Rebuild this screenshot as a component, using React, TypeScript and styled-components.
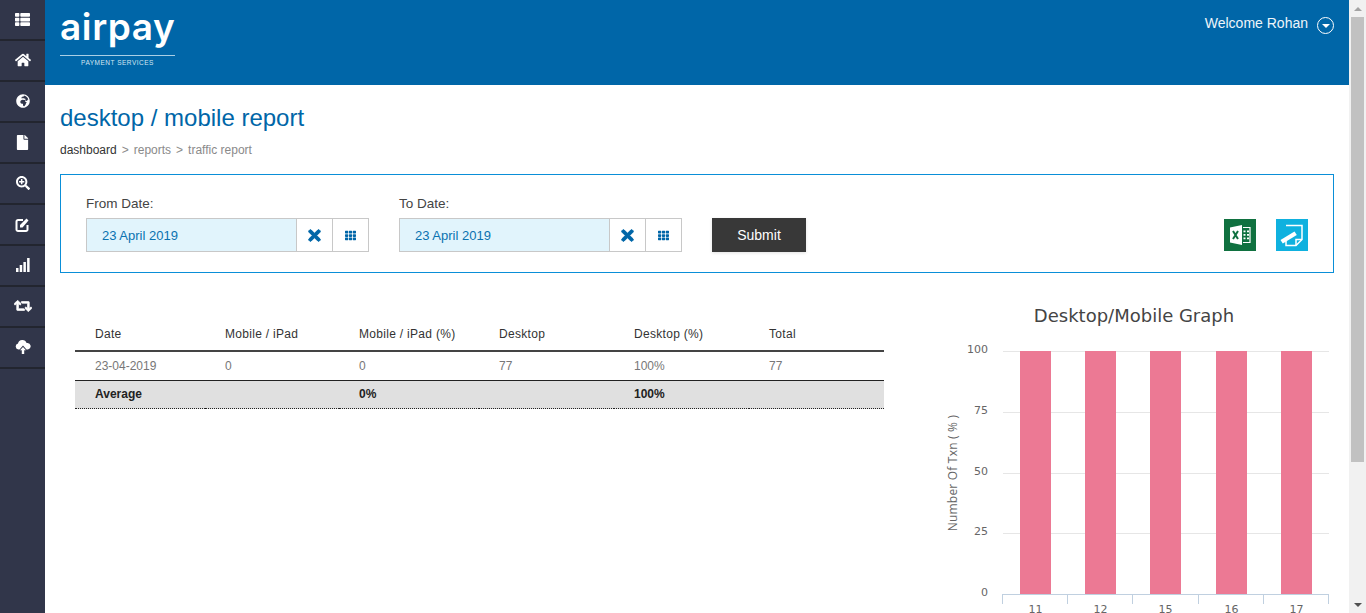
import React from 'react';
import styled, { createGlobalStyle } from 'styled-components';
import { FaHome, FaGlobeAfrica, FaFile, FaSearchPlus, FaRetweet, FaTh, FaThList, FaTimes } from 'react-icons/fa';

const GlobalStyle = createGlobalStyle`
  html, body {
    margin: 0;
    height: 100%;
    overflow: hidden;
    background: #fff;
    font-family: "Liberation Sans", Arial, sans-serif;
  }
`;

const Shell = styled.div`
  display: flex;
  width: 1366px;
  height: 613px;
  overflow: hidden;
`;

const Sidebar = styled.nav`
  flex: 0 0 45px;
  background: #31364a;
`;

const SideItem = styled.div`
  height: 38px;
  padding-bottom: 1px;
  display: flex;
  align-items: center;
  justify-content: center;
  color: #fff;
  font-size: 15px;
  border-bottom: 2px solid #22252f;
`;

const Main = styled.div`
  flex: 0 0 1304px;
  display: flex;
  flex-direction: column;
  height: 613px;
  overflow: hidden;
`;

const Header = styled.header`
  height: 85px;
  flex: none;
  background: #0066a8;
  display: flex;
  justify-content: space-between;
  padding: 0 15px;
  box-sizing: border-box;
`;

const Logo = styled.div`
  width: 115px;
  margin-top: 8px;
  color: #fff;
  text-align: center;
`;

const LogoWord = styled.div`
  font-family: "Inter", sans-serif;
  font-weight: 600;
  font-size: 37px;
  line-height: 38px;
  letter-spacing: 0.6px;
  white-space: nowrap;
  border-bottom: 1px solid #a9cfe6;
  height: 47px;
`;

const LogoSub = styled.div`
  font-size: 6.5px;
  line-height: 13px;
  letter-spacing: 0.5px;
  color: #d5e6f2;
`;

const Welcome = styled.div`
  margin-top: 14px;
  display: flex;
  align-items: center;
  gap: 9px;
  height: 18px;
  color: #eef5fa;
  font-size: 14px;
`;

const CaretCircle = styled.span`
  width: 15px;
  height: 15px;
  border: 1px solid #fff;
  border-radius: 50%;
  margin-top: 4px;
  display: flex;
  align-items: center;
  justify-content: center;
  &::after {
    content: '';
    margin-top: 2px;
    border-left: 4px solid transparent;
    border-right: 4px solid transparent;
    border-top: 4px solid #fff;
  }
`;

const Content = styled.div`
  padding: 19px 15px 0;
`;

const Title = styled.h1`
  margin: 0;
  font-weight: 400;
  font-size: 24px;
  line-height: 28px;
  color: #0066a8;
`;

const Crumbs = styled.div`
  margin-top: 11px;
  display: flex;
  gap: 5px;
  font-size: 12px;
  line-height: 14px;
  color: #8a8a8a;
`;

const CrumbActive = styled.span`
  color: #333;
`;

const FilterBox = styled.section`
  margin-top: 17px;
  height: 99px;
  box-sizing: border-box;
  border: 1px solid #0a8fd8;
  padding: 21px 25px 0;
  display: flex;
  align-items: flex-start;
`;

const Field = styled.div`
  width: 283px;
  margin-right: 30px;
`;

const FieldLabel = styled.div`
  font-size: 13.5px;
  line-height: 15px;
  color: #444;
  margin-bottom: 7px;
`;

const InputGroup = styled.div`
  display: flex;
  height: 34px;
  box-sizing: border-box;
  border: 1px solid #c8c8c8;
`;

const DateValue = styled.div`
  flex: 1;
  background: #e1f4fc;
  color: #0a72b0;
  font-size: 13px;
  line-height: 33px;
  padding-left: 15px;
`;

const AddOn = styled.div`
  width: 35px;
  border-left: 1px solid #c8c8c8;
  display: flex;
  align-items: center;
  justify-content: center;
  color: #0066a8;
`;

const SubmitButton = styled.button`
  margin-top: 22px;
  width: 94px;
  height: 34px;
  border: 0;
  background: #383838;
  color: #fff;
  font: 14px "Liberation Sans", Arial, sans-serif;
  box-shadow: 0 1px 3px rgba(0, 0, 0, 0.12);
`;

const ExportIcons = styled.div`
  margin-left: auto;
  margin-top: 23px;
  display: flex;
  gap: 20px;
`;

const Lower = styled.div`
  display: flex;
  padding-left: 15px;
  margin-top: 22px;
`;

const TableWrap = styled.div`
  flex: 0 0 809px;
  padding-top: 9px;
`;

const Table = styled.table`
  width: 809px;
  border-collapse: collapse;
  table-layout: fixed;
  font-size: 12px;
  color: #777;
`;

const HeadRow = styled.tr`
  height: 47px;
  border-bottom: 2px solid #444;
`;

const Th = styled.th<{ $w: number }>`
  width: ${p => p.$w}px;
  box-sizing: border-box;
  font-weight: 400;
  text-align: left;
  color: #333;
  letter-spacing: 0.3px;
  padding: 14px 0 0 20px;
`;

const Td = styled.td`
  padding: 0 0 0 20px;
  height: 28px;
`;

const TotalRow = styled.tr`
  background: #e0e0e0;
  color: #222;
  font-weight: 700;
  border-top: 1px solid #222;
  border-bottom: 1px dotted #222;
  td {
    height: 26px;
    padding-bottom: 1px;
  }
`;

const ChartWrap = styled.div`
  margin-left: 46px;
  width: 400px;
`;

const columns = [
  { label: 'Date', w: 130 },
  { label: 'Mobile / iPad', w: 134 },
  { label: 'Mobile / iPad (%)', w: 140 },
  { label: 'Desktop', w: 135 },
  { label: 'Desktop (%)', w: 135 },
  { label: 'Total', w: 135 },
];

const Scrollbar = styled.div`
  flex: 0 0 17px;
  background: #f1f1f1;
  display: flex;
  flex-direction: column;
  align-items: center;
  height: 613px;
`;

const ScrollArrow = styled.div<{ $up?: boolean }>`
  flex: 0 0 17px;
  width: 17px;
  display: flex;
  align-items: center;
  justify-content: center;
  &::after {
    content: '';
    border-left: 4px solid transparent;
    border-right: 4px solid transparent;
    ${p => (p.$up ? 'border-bottom: 4px solid #a3a3a3;' : 'border-top: 4px solid #505050;')}
  }
`;

const ScrollThumb = styled.div`
  width: 13px;
  height: 445px;
  background: #c1c1c1;
`;

const ScrollGap = styled.div`
  flex: 1;
`;

const ChartLabel = styled.text`
  font-family: "DejaVu Sans", sans-serif;
  font-size: 11px;
  fill: #666;
`;

const AxisTitle = styled.text`
  font-family: "Open Sans", sans-serif;
  font-size: 12px;
  letter-spacing: 0.2px;
  fill: #666;
`;

const ChartTitle = styled.text`
  font-family: "DejaVu Sans", sans-serif;
  font-size: 18px;
  fill: #444;
`;

// sidebar icons the fa set has no close match for
const EditIcon: React.FC = () => (
  <svg width="15" height="15" viewBox="0 0 15 15">
    <path d="M8 3H3a1.5 1.5 0 0 0-1.5 1.5v8A1.5 1.5 0 0 0 3 14h8a1.5 1.5 0 0 0 1.5-1.5V8" fill="none" stroke="#fff" strokeWidth="2" />
    <path d="M5 10.5V8l6.5-6.5 2 2L7.5 10.500z" fill="#fff" />
  </svg>
);

const BarsIcon: React.FC = () => (
  <svg width="14" height="14" viewBox="0 0 14 14" fill="#fff">
    <rect x="0" y="10" width="2.500" height="4" />
    <rect x="3.700" y="7" width="2.500" height="7" />
    <rect x="7.400" y="4" width="2.500" height="10" />
    <rect x="11.100" y="0" width="2.500" height="14" />
  </svg>
);

const CloudIcon: React.FC = () => (
  <svg width="16" height="14" viewBox="0 0 16 14" fill="#fff">
    <path d="M3.500 9.500A3 3 0 0 1 3 3.600 4.500 4.500 0 0 1 11.600 3 3.300 3.300 0 0 1 13 9.500h-1.500L8 5.500l-3.500 4z" />
    <path d="M8 7l3 3.200H9.200V14H6.800v-3.800H5z" />
  </svg>
);

const ExcelTile: React.FC = () => (
  <svg width="32" height="32" viewBox="0 0 32 32">
    <rect width="32" height="32" fill="#107140" />
    <path d="M6 8.500 18 6v20L6 23.500z" fill="#fff" />
    <path d="M9 12l5 8M14 12l-5 8" stroke="#107140" strokeWidth="2" fill="none" />
    <path d="M19 8.500h7v15h-7" fill="none" stroke="#fff" strokeWidth="1.200" />
    <path d="M19.500 11.500h2v1.800h-2zM23 11.500h2v1.800h-2zM19.500 15h2v1.800h-2zM23 15h2v1.800h-2zM19.500 18.500h2v1.800h-2zM23 18.500h2v1.800h-2z" fill="#fff" />
  </svg>
);

const NoteTile: React.FC = () => (
  <svg width="32" height="32" viewBox="0 0 32 32">
    <rect width="32" height="32" fill="#0fb1df" />
    <path d="M10 6.500h16v14l-6 6H10V20" fill="none" stroke="#fff" strokeWidth="1.500" />
    <path d="M26 20.500h-6v6" fill="none" stroke="#fff" strokeWidth="1.500" />
    <path d="M4.500 21 18.500 12.500l2.300 3.500-14 8.500z" fill="#fff" />
  </svg>
);

// chart origin: the svg starts at x=930,y=295 of the page
const Chart: React.FC = () => {
  const ticks = [
    { v: '100', y: 56 },
    { v: '75', y: 117 },
    { v: '50', y: 178 },
    { v: '25', y: 238 },
    { v: '0', y: 299 },
  ];
  const bars = [
    { x: 90, label: '11' },
    { x: 155, label: '12' },
    { x: 220, label: '15' },
    { x: 286, label: '16' },
    { x: 351, label: '17' },
  ];
  return (
    <svg width="400" height="318" style={{ display: 'block' }}>
      <ChartTitle x="204" y="27" textAnchor="middle">Desktop/Mobile Graph</ChartTitle>
      {ticks.slice(0, 4).map(t => (
        <line key={t.v} x1="73" x2="399" y1={t.y + 0.5} y2={t.y + 0.5} stroke="#e6e6e6" />
      ))}
      {ticks.map(t => (
        <ChartLabel key={t.v} x="58" y={t.y + 2} textAnchor="end">{t.v}</ChartLabel>
      ))}
      {bars.map(b => (
        <rect key={b.x} x={b.x} y="56" width="31" height="243" fill="#ec7994" />
      ))}
      <line x1="72" x2="399" y1="299.5" y2="299.5" stroke="#c0d0e0" />
      {[72.5, 137.5, 202.5, 268.5, 333.5, 398.5].map(x => (
        <line key={x} x1={x} x2={x} y1="299" y2="309" stroke="#c0d0e0" />
      ))}
      {bars.map(b => (
        <ChartLabel key={b.label} x={b.x + 15.5} y="318" textAnchor="middle">{b.label}</ChartLabel>
      ))}
      <AxisTitle transform="translate(27 178) rotate(-90)" textAnchor="middle">Number Of Txn ( % )</AxisTitle>
    </svg>
  );
};

const DateField: React.FC<{ label: string; value: string }> = ({ label, value }) => (
  <Field>
    <FieldLabel>{label}</FieldLabel>
    <InputGroup>
      <DateValue>{value}</DateValue>
      <AddOn><FaTimes size={17} stroke="currentColor" strokeWidth={30} /></AddOn>
      <AddOn><FaTh size={11} /></AddOn>
    </InputGroup>
  </Field>
);

export default function App() {
  return (
    <Shell>
      <GlobalStyle />
      <Sidebar>
        <SideItem><FaThList /></SideItem>
        <SideItem><FaHome size={16} /></SideItem>
        <SideItem><FaGlobeAfrica size={14} /></SideItem>
        <SideItem><FaFile size={15} /></SideItem>
        <SideItem><FaSearchPlus size={14} /></SideItem>
        <SideItem><EditIcon /></SideItem>
        <SideItem><BarsIcon /></SideItem>
        <SideItem><FaRetweet size={18} stroke="currentColor" strokeWidth={24} /></SideItem>
        <SideItem><CloudIcon /></SideItem>
      </Sidebar>
      <Main>
        <Header>
          <Logo>
            <LogoWord>airpay</LogoWord>
            <LogoSub>PAYMENT SERVICES</LogoSub>
          </Logo>
          <Welcome>Welcome Rohan <CaretCircle /></Welcome>
        </Header>
        <Content>
          <Title>desktop / mobile report</Title>
          <Crumbs>
            <CrumbActive>dashboard</CrumbActive>
            <span>&gt;</span>
            <span>reports</span>
            <span>&gt;</span>
            <span>traffic report</span>
          </Crumbs>
          <FilterBox>
            <DateField label="From Date:" value="23 April 2019" />
            <DateField label="To Date:" value="23 April 2019" />
            <SubmitButton>Submit</SubmitButton>
            <ExportIcons>
              <ExcelTile />
              <NoteTile />
            </ExportIcons>
          </FilterBox>
          <Lower>
            <TableWrap>
              <Table>
                <thead>
                  <HeadRow>
                    {columns.map(c => <Th key={c.label} $w={c.w}>{c.label}</Th>)}
                  </HeadRow>
                </thead>
                <tbody>
                  <tr>
                    <Td>23-04-2019</Td><Td>0</Td><Td>0</Td><Td>77</Td><Td>100%</Td><Td>77</Td>
                  </tr>
                  <TotalRow>
                    <Td>Average</Td><Td></Td><Td>0%</Td><Td></Td><Td>100%</Td><Td></Td>
                  </TotalRow>
                </tbody>
              </Table>
            </TableWrap>
            <ChartWrap><Chart /></ChartWrap>
          </Lower>
        </Content>
      </Main>
      <Scrollbar>
        <ScrollArrow $up />
        <ScrollThumb />
        <ScrollGap />
        <ScrollArrow />
      </Scrollbar>
    </Shell>
  );
}
